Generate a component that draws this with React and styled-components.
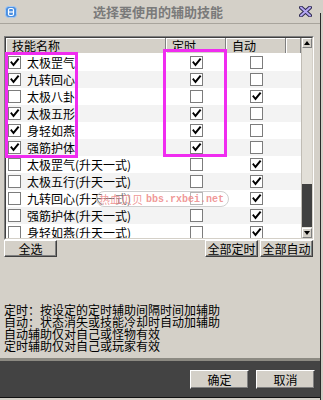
import React from "react";
import styled, { createGlobalStyle } from "styled-components";

const GlobalStyle = createGlobalStyle`
  html, body {
    margin: 0;
    padding: 0;
    background: #d4d0c8;
  }
  body {
    font-family: "Noto Sans CJK SC", "Liberation Sans", sans-serif;
    font-size: 12px;
    color: #000;
  }
`;

const Frame = styled.div`
  position: relative;
  display: flex;
  width: 323px;
  height: 400px;
  overflow: hidden;
  background: #d4d0c8;
`;

const Dialog = styled.div`
  width: 320px;
  display: flex;
  flex-direction: column;
  padding-bottom: 2px;
`;

const Edge = styled.div`
  flex: 1;
  margin-top: 13px;
  border-left: 1px solid #2a2a2a;
  background: #d4d0c8;
`;

const TitleBar = styled.div`
  height: 23px;
  border-bottom: 1px solid #a8a49c;
  display: flex;
  align-items: center;
  padding: 0 8px 0 5px;
`;

const Title = styled.div`
  flex: 1;
  text-align: center;
  font-size: 13px;
  font-weight: bold;
  color: #7a7a7a;
`;

const Body = styled.div`
  flex: 1;
  padding: 12px 6px 0 4px;
  display: flex;
  flex-direction: column;
`;

const Table = styled.div`
  width: 310px;
  height: 204px;
  box-sizing: border-box;
  border: 1px solid;
  border-color: #808080 #ffffff #ffffff #808080;
`;

const TableInner = styled.div`
  height: 100%;
  box-sizing: border-box;
  border: 1px solid;
  border-color: #404040 #d4d0c8 #d4d0c8 #404040;
  display: flex;
  background: #fff;
`;

const ListArea = styled.div`
  flex: 1;
  display: flex;
  flex-direction: column;
  overflow: hidden;
`;

const Header = styled.div`
  display: grid;
  grid-template-columns: 160px 60px 60px 1fr;
  height: 15px;
  flex-shrink: 0;
  background: #d4d0c8;
`;

const HeaderCell = styled.div`
  box-sizing: border-box;
  border-right: 1px solid #808080;
  box-shadow: inset 1px 1px #ffffff;
  padding-left: 6px;
  display: flex;
  align-items: center;
  font-size: 12px;
  line-height: 15px;
  white-space: nowrap;
`;

const Rows = styled.div`
  padding-top: 1px;
`;

const Row = styled.div`
  display: grid;
  grid-template-columns: 160px 60px 60px 1fr;
  height: 17px;
  background: ${(p) => (p.$alt ? "#f3f3f3" : "#ffffff")};
`;

const NameCell = styled.div`
  display: flex;
  align-items: center;
  gap: 6px;
  padding-left: 2px;
  white-space: nowrap;
  line-height: 17px;
`;

const CheckCell = styled.div`
  display: flex;
  align-items: center;
  justify-content: center;
`;

const Box = styled.span`
  width: 13px;
  height: 13px;
  box-sizing: border-box;
  border: 1px solid #7c7c7c;
  background: #fff;
  display: inline-flex;
  flex-shrink: 0;
`;

const ScrollBar = styled.div`
  width: 10px;
  display: flex;
  flex-direction: column;
  background: #e2dfd8;
  border-left: 1px solid #c0bcb4;
`;

const ScrollButton = styled.div`
  height: 10px;
  box-sizing: border-box;
  background: #d4d0c8;
  border: 1px solid;
  border-color: #ffffff #808080 #808080 #ffffff;
  display: flex;
  align-items: center;
  justify-content: center;
  flex-shrink: 0;
`;

const Track = styled.div`
  flex: 1;
  display: flex;
  flex-direction: column;
  justify-content: flex-end;
`;

const Thumb = styled.div`
  height: 43px;
  background: #404040;
  margin-bottom: 1px;
`;

const ButtonRow = styled.div`
  display: flex;
  justify-content: space-between;
  padding-right: 1px;
`;

const ButtonGroup = styled.div`
  display: flex;
  gap: 2px;
`;

const Button = styled.button`
  width: ${(p) => p.$w || 53}px;
  height: ${(p) => p.$h || 17}px;
  padding: 0;
  margin: 0;
  box-sizing: border-box;
  background: #d4d0c8;
  border: 1px solid;
  border-color: #ffffff #404040 #404040 #ffffff;
  box-shadow: inset -1px -1px #808080;
  font-family: "Noto Sans CJK SC", "Liberation Sans", sans-serif;
  font-size: 12px;
  line-height: 1;
  color: #000;
`;

const Notes = styled.div`
  margin-top: 47px;
  font-size: 12px;
  line-height: 12px;
  white-space: nowrap;
`;

const Footer = styled.div`
  height: 40px;
  box-sizing: border-box;
  border-top: 3px solid #8c8a82;
  border-bottom: 1px solid #111;
  background: #434343;
  display: flex;
  justify-content: flex-end;
  gap: 7px;
  padding: 9px 5px 0 0;
`;

const Highlight = styled.div`
  position: absolute;
  left: ${(p) => p.$x}px;
  top: ${(p) => p.$y}px;
  width: ${(p) => p.$w}px;
  height: ${(p) => p.$h}px;
  box-sizing: border-box;
  border: 3px solid #f02cf0;
  pointer-events: none;
`;

const Watermark = styled.div`
  position: absolute;
  left: 96px;
  top: 191px;
  width: 133px;
  height: 16px;
  box-sizing: border-box;
  border: 1px solid #cfcfcf;
  border-radius: 8px;
  background: rgba(255, 255, 255, 0.45);
  display: flex;
  align-items: center;
  gap: 3px;
  padding-left: 2px;
  color: rgba(238, 140, 140, 0.9);
  font-weight: bold;
  white-space: nowrap;
  pointer-events: none;
`;

const MarkCn = styled.span`
  font-size: 11px;
  font-weight: normal;
`;

const MarkUrl = styled.span`
  font-family: "Liberation Mono", "DejaVu Sans Mono", monospace;
  font-size: 10px;
`;

const Tick = () => (
  <svg width="11" height="11" viewBox="0 0 11 11">
    <polyline
      points="2.5,5.5 4.5,8 9,2.5"
      fill="none"
      stroke="#000"
      strokeWidth="2"
      strokeLinecap="square"
    />
  </svg>
);

const Check = ({ on }) => <Box>{on && <Tick />}</Box>;

const AppIcon = () => (
  <svg width="12" height="12" viewBox="0 0 12 12">
    <rect x="0.5" y="0.5" width="11" height="11" rx="3" fill="#4b8fe0" stroke="#a9cbf2" />
    <rect x="3.5" y="2.5" width="5" height="7" rx="1.5" fill="none" stroke="#fff" strokeWidth="1.2" />
    <line x1="3.5" y1="6" x2="8.5" y2="6" stroke="#fff" strokeWidth="1.2" />
  </svg>
);

const CloseIcon = () => (
  <svg width="13" height="11" viewBox="0 0 13 11">
    <path d="M2 1.5 L11 9.5 M11 1.5 L2 9.5" stroke="#2e2a52" strokeWidth="4" strokeLinecap="round" />
    <path d="M2 1.5 L11 9.5 M11 1.5 L2 9.5" stroke="#b4a6f2" strokeWidth="2" strokeLinecap="round" />
  </svg>
);

const Arrow = ({ up }) => (
  <svg width="6" height="4" viewBox="0 0 6 4">
    <polygon points={up ? "0,4 6,4 3,0" : "0,0 6,0 3,4"} fill="#000" />
  </svg>
);

const skills = [
  { name: "太极罡气", timed: true, auto: false, on: true },
  { name: "九转回心", timed: true, auto: false, on: true },
  { name: "太极八卦", timed: false, auto: true, on: false },
  { name: "太极五形", timed: true, auto: false, on: true },
  { name: "身轻如燕", timed: true, auto: false, on: true },
  { name: "强筋护体", timed: true, auto: false, on: true },
  { name: "太极罡气(升天一式)", timed: false, auto: true, on: false },
  { name: "太极五行(升天一式)", timed: false, auto: true, on: false },
  { name: "九转回心(升天一式)", timed: false, auto: true, on: false },
  { name: "强筋护体(升天一式)", timed: false, auto: true, on: false },
  { name: "身轻如燕(升天一式)", timed: false, auto: true, on: false },
];

export default function App() {
  return (
    <>
      <GlobalStyle />
      <Frame>
        <Dialog>
          <TitleBar>
            <AppIcon />
            <Title>选择要使用的辅助技能</Title>
            <CloseIcon />
          </TitleBar>
          <Body>
            <Table>
              <TableInner>
                <ListArea>
                  <Header>
                    <HeaderCell>技能名称</HeaderCell>
                    <HeaderCell>定时</HeaderCell>
                    <HeaderCell>自动</HeaderCell>
                    <HeaderCell />
                  </Header>
                  <Rows>
                    {skills.map((s, i) => (
                      <Row key={i} $alt={i % 2 === 1}>
                        <NameCell>
                          <Check on={s.on} />
                          {s.name}
                        </NameCell>
                        <CheckCell>
                          <Check on={s.timed} />
                        </CheckCell>
                        <CheckCell>
                          <Check on={s.auto} />
                        </CheckCell>
                        <div />
                      </Row>
                    ))}
                  </Rows>
                </ListArea>
                <ScrollBar>
                  <ScrollButton>
                    <Arrow up />
                  </ScrollButton>
                  <Track>
                    <Thumb />
                  </Track>
                  <ScrollButton>
                    <Arrow />
                  </ScrollButton>
                </ScrollBar>
              </TableInner>
            </Table>
            <ButtonRow>
              <Button>全选</Button>
              <ButtonGroup>
                <Button>全部定时</Button>
                <Button>全部自动</Button>
              </ButtonGroup>
            </ButtonRow>
            <Notes>
              <div>定时：按设定的定时辅助间隔时间加辅助</div>
              <div>自动：状态消失或技能冷却时自动加辅助</div>
              <div>自动辅助仅对自己或怪物有效</div>
              <div>定时辅助仅对自己或玩家有效</div>
            </Notes>
          </Body>
          <Footer>
            <Button $w={59} $h={19}>确定</Button>
            <Button $w={59} $h={19}>取消</Button>
          </Footer>
        </Dialog>
        <Edge />
        <Highlight $x={5} $y={52} $w={73} $h={106} />
        <Highlight $x={163} $y={49} $w={64} $h={108} />
        <Watermark>
          <MarkCn>热血贝贝</MarkCn>
          <MarkUrl>bbs.rxbei.net</MarkUrl>
        </Watermark>
      </Frame>
    </>
  );
}
